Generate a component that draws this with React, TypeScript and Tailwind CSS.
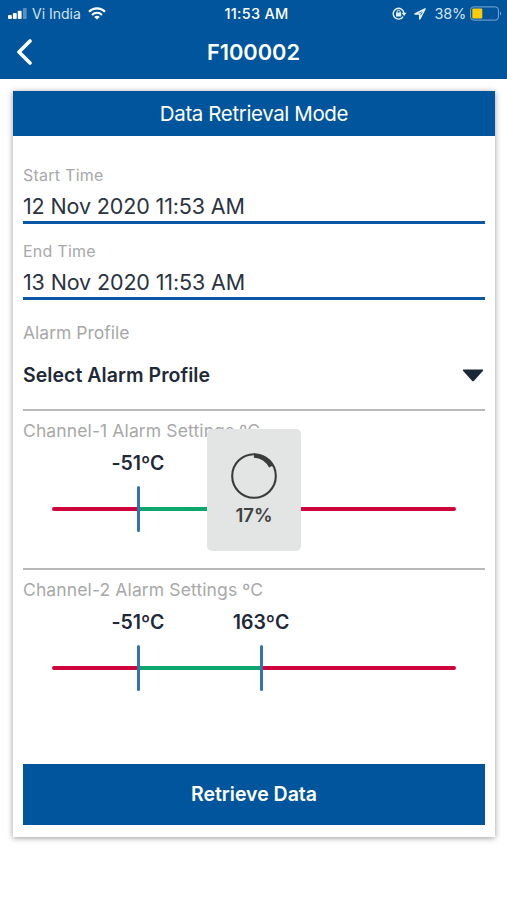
import React from 'react';

type Limit = { value: string; slot: string };

const FIELDS = [
  { label: 'Start Time', value: '12 Nov 2020 11:53 AM' },
  { label: 'End Time', value: '13 Nov 2020 11:53 AM' },
];

const CHANNELS: { name: string; limits: Limit[] }[] = [
  {
    name: 'Channel-1 Alarm Settings ºC',
    limits: [
      { value: '-51ºC', slot: 'w-[124px]' },
      { value: '163ºC', slot: 'w-[122px]' },
    ],
  },
  {
    name: 'Channel-2 Alarm Settings ºC',
    limits: [
      { value: '-51ºC', slot: 'w-[124px]' },
      { value: '163ºC', slot: 'w-[122px]' },
    ],
  },
];

/* ── Status bar icons ── */
const SignalIcon = () => (
  <svg width="19" height="12" viewBox="0 0 19 12" fill="#fff">
    <rect x="0" y="7" width="3.8" height="4" rx="0.8" />
    <rect x="4.9" y="5" width="3.8" height="6" rx="0.8" />
    <rect x="9.8" y="2.8" width="3.8" height="8.2" rx="0.8" />
    <rect x="14.9" y="0" width="3.8" height="11" rx="0.8" opacity="0.35" />
  </svg>
);

const WifiIcon = () => (
  <svg width="18" height="13" viewBox="0 0 18 13" fill="none" stroke="#fff" strokeWidth="2.1">
    <path d="M1 4.7C5.5 0.3 12.5 0.3 17 4.7" />
    <path d="M4 7.9C6.8 5.1 11.2 5.1 14 7.9" />
    <path d="M9 12.6L6.2 9.9C7.8 8.5 10.2 8.5 11.8 9.9Z" fill="#fff" stroke="none" />
  </svg>
);

const RotationLockIcon = () => (
  <svg width="15" height="13" viewBox="0 0 15 13" fill="none" stroke="#e6f0f8">
    <path d="M11.2 9.6A5.4 5.4 0 1 1 12 6.2" strokeWidth="1.4" />
    <path d="M9.6 5.8H14.6L12.1 9Z" fill="#e6f0f8" stroke="none" />
    <rect x="4" y="5.6" width="5.2" height="4" rx="0.5" fill="#e6f0f8" stroke="none" />
    <path d="M5.1 6V4.7A1.5 1.5 0 0 1 8.1 4.7V6" strokeWidth="1" />
  </svg>
);

const LocationIcon = () => (
  <svg width="12" height="12" viewBox="0 0 12 12" fill="none" stroke="#e6f0f8" strokeWidth="1.6" strokeLinejoin="round">
    <path d="M11 1L1 6H5.8V11Z" />
    <path d="M11 1L5.8 6" strokeWidth="1" />
  </svg>
);

const BatteryIcon = () => (
  <svg width="32" height="15" viewBox="0 0 32 15" fill="none">
    <rect x="0.6" y="0.9" width="27.8" height="13.2" rx="3" stroke="#7fa9cf" strokeWidth="1" />
    <rect x="2.3" y="2.6" width="10" height="9.8" rx="1" fill="#fecb07" />
    <path d="M30 5.5C31.4 6 31.4 9 30 9.5Z" fill="#7fa9cf" />
  </svg>
);

/* ── Alarm range with its two limit markers ── */
const AlarmRange: React.FC<{ limits: Limit[] }> = ({ limits }) => (
  <div className="px-[29px]">
    <div className="flex h-[33px] items-center pl-[24px]">
      {limits.map((limit) => (
        <div
          key={limit.value}
          className={`${limit.slot} flex justify-center text-[19.5px] font-semibold leading-none tracking-[-0.05px] text-[#1f2937]`}
        >
          {limit.value}
        </div>
      ))}
    </div>
    <div className="mt-[6px] flex h-[46px] items-center">
      <div className="h-[4px] w-[85px] rounded-l-full bg-[#d0043c]" />
      <div className="h-[46px] w-[3px] rounded-full bg-[#3373b4]" />
      <div className="h-[4px] w-[120px] bg-[#0da66c]" />
      <div className="h-[46px] w-[3px] rounded-full bg-[#3373b4]" />
      <div className="h-[4px] flex-1 rounded-r-full bg-[#d0043c]" />
    </div>
  </div>
);

const Progress = () => (
  <div className="absolute left-[207px] top-[429px] flex h-[122px] w-[94px] flex-col items-center rounded-[5px] bg-[#e3e4e4] pt-[23px]">
    <svg width="48" height="48" viewBox="0 0 48 48" fill="none" stroke="#3b3b3b">
      <circle cx="24" cy="24" r="21.8" strokeWidth="2.1" />
      <path d="M24 3.6A20.4 20.4 0 0 1 41 14.6" strokeWidth="4.4" />
    </svg>
    <span className="mt-[6px] text-[18.5px] font-semibold leading-none text-[#3f4040]">17%</span>
  </div>
);

export default function App() {
  return (
    <main className="relative h-[900px] w-[507px] overflow-hidden bg-white font-['Inter',sans-serif]">
      <header className="h-[79px] bg-[#01559d] text-white">
        <div className="grid h-[27px] grid-cols-3 items-center leading-none">
          <div className="flex items-center pl-[8px]">
            <SignalIcon />
            <span className="ml-[5px] text-[14px] text-[#d3e3f2]">Vi India</span>
            <span className="ml-[7px]">
              <WifiIcon />
            </span>
          </div>
          <span className="pl-[6px] pt-px text-center text-[14.5px] font-medium tracking-[0.25px]">11:53 AM</span>
          <div className="flex items-center justify-end pr-[5px]">
            <RotationLockIcon />
            <span className="ml-[7px]">
              <LocationIcon />
            </span>
            <span className="ml-[8px] mr-[4px] pt-[2px] text-[14.5px] tracking-[-0.2px] text-[#d3e3f2]">38%</span>
            <BatteryIcon />
          </div>
        </div>
        <div className="grid h-[50px] grid-cols-3 items-center">
          <button className="pl-[16px]" aria-label="Back">
            <svg width="17" height="26" viewBox="0 0 17 26" fill="none" stroke="#fff" strokeWidth="3.6" strokeLinecap="round" strokeLinejoin="round">
              <path d="M14 2L3 13L14 24" />
            </svg>
          </button>
          <h1 className="pt-[2px] text-center text-[21.8px] font-semibold leading-none">F100002</h1>
        </div>
      </header>

      <section className="mx-[13px] mt-[12px] h-[746px] w-[482px] bg-white shadow-[0_1px_6px_rgba(0,0,0,0.4)]">
        <h2 className="flex h-[45px] items-center justify-center bg-[#01559d] pt-[2px] text-[20.5px] leading-none tracking-[-0.38px] text-white">
          Data Retrieval Mode
        </h2>

        <div className="px-[10px] pt-[24px]">
          {FIELDS.map((field) => (
            <div key={field.label} className="flex h-[76px] flex-col">
              <span className="flex h-[29px] items-center text-[16px] leading-none tracking-[0.25px] text-[#a8a8a8]">
                {field.label}
              </span>
              <span className="flex h-[35px] items-center border-b-[3px] border-[#0a58a5] pt-[4px] text-[21.5px] leading-none tracking-[-0.13px] text-[#2b333f]">
                {field.value}
              </span>
            </div>
          ))}

          <div className="h-[99px] border-b-2 border-[#b9b9b9] pt-[7px]">
            <div className="flex h-[27px] items-center pt-[1px] text-[17.5px] leading-none text-[#a8a8a8]">Alarm Profile</div>
            <div className="flex h-[60px] items-center justify-between pr-px text-[19.5px] font-semibold leading-none tracking-[0.05px] text-[#1f2937]">
              Select Alarm Profile
              <svg width="22" height="13" viewBox="0 0 22 13" className="mb-[2px] fill-[#1b2838]">
                <path d="M1.2 0.5H20.8Q21.6 1 20.8 2L12 11.8Q11 12.8 10 11.8L1.2 2Q0.4 1 1.2 0.5Z" />
              </svg>
            </div>
          </div>

          {CHANNELS.map((channel) => (
            <div key={channel.name} className="h-[159px] border-b-2 border-[#b9b9b9] pt-[4px] last-of-type:border-b-0">
              <div className="flex h-[32px] items-center text-[17.5px] leading-none tracking-[0.12px] text-[#a8a8a8]">
                {channel.name}
              </div>
              <AlarmRange limits={channel.limits} />
            </div>
          ))}

          <button className="mt-[35px] flex h-[61px] w-full items-center justify-center bg-[#01559d] text-[19.5px] font-semibold leading-none text-white">
            Retrieve Data
          </button>
        </div>
      </section>

      <Progress />
    </main>
  );
}
